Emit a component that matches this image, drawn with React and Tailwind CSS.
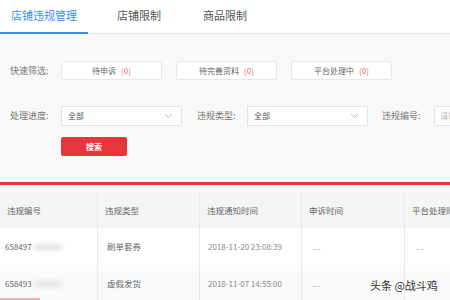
import React from 'react';

const font = { fontFamily: '"Noto Sans CJK SC", "Liberation Sans", sans-serif' };

function Chevron() {
  return (
    <svg width="9" height="6" viewBox="0 0 9 6" fill="none" stroke="#bfbfbf" strokeWidth="1">
      <path d="M1 1l3.5 3.5L8 1" />
    </svg>
  );
}

function QuickBtn({ label }) {
  return (
    <div className="w-[101px] h-[19px] shrink-0 bg-white border border-[#e8e8e8] rounded-[2px] flex items-center justify-center text-[8px] text-[#666]">
      {label}
      <span className="text-[#e9686b] ml-[5px]">(0)</span>
    </div>
  );
}

function Select() {
  return (
    <div className="w-[121px] h-[20px] shrink-0 bg-white border border-[#e6e6e6] flex items-center justify-between pl-[6px] pr-[8px] text-[8px] text-[#555]">
      <span>全部</span>
      <Chevron />
    </div>
  );
}

const cols = ['w-[98px]', 'w-[102px]', 'w-[102px]', 'w-[103px]', 'w-[80px]'];

const rows = [
  ['刷单套券', '2018-11-20 23:08:39', '658497'],
  ['虚假发货', '2018-11-07 14:55:00', '658493'],
];

export default function App() {
  return (
    <div className="w-[450px] h-[300px] overflow-hidden bg-[#f9f9f9] relative" style={font}>
      {/* Tabs */}
      <div className="h-[34px] bg-white border-b border-[#ececec] flex items-end text-[11px]">
        <div className="w-[88px] shrink-0 h-[34px] flex items-center justify-center pb-[2px] text-[#3a8ee6] border-b-2 border-[#3a8ee6] -mb-px">
          店铺违规管理
        </div>
        <div className="w-[102px] shrink-0 h-[34px] flex items-center justify-center pb-[2px] text-[#555]">
          店铺限制
        </div>
        <div className="w-[70px] shrink-0 h-[34px] flex items-center justify-center pb-[2px] text-[#555]">
          商品限制
        </div>
      </div>

      {/* Filters */}
      <div className="pl-[10px] pt-[27px] h-[151px] border-b-[3px] border-[#e53a3a]">
        <div className="flex items-center">
          <span className="w-[51px] shrink-0 text-[9px] text-[#777]">快速筛选:</span>
          <div className="flex gap-[14px]">
            <QuickBtn label="待申诉" />
            <QuickBtn label="待完善资料" />
            <QuickBtn label="平台处理中" />
          </div>
        </div>

        <div className="flex items-center mt-[26px]">
          <span className="w-[51px] shrink-0 text-[9px] text-[#777]">处理进度:</span>
          <Select />
          <span className="w-[65px] shrink-0 pl-[15px] text-[9px] text-[#777]">违规类型:</span>
          <Select />
          <span className="w-[66px] shrink-0 pl-[14px] text-[9px] text-[#777]">违规编号:</span>
          <div className="w-[60px] shrink-0 h-[20px] bg-white border border-[#e6e6e6] flex items-center pl-[5px] text-[8px] text-[#bbb]">
            请输入
          </div>
        </div>

        <div className="ml-[51px] mt-[11px] w-[66px] h-[19px] bg-[#e5373b] rounded-[2px] flex items-center justify-center text-[8px] text-white font-bold">
          搜索
        </div>
      </div>

      {/* Table */}
      <div className="mt-[7px] bg-white">
        <div className="flex h-[36px] bg-[#f5f5f5] text-[8.5px] text-[#666]">
          {['违规编号', '违规类型', '违规通知时间', '申诉时间', '平台处理时间'].map((h, i) => (
            <div key={h} className={`${cols[i]} shrink-0 flex items-center pl-[7px] whitespace-nowrap border-r border-[#ebebeb]`}>
              {h}
            </div>
          ))}
        </div>
        {rows.map((r, idx) => (
          <div key={idx} className={`flex h-[37px] text-[8.5px] text-[#666] ${idx === 1 ? 'bg-[#fafafa]' : 'bg-white'}`}>
            <div className={`${cols[0]} shrink-0 flex items-center pl-[5px] border-r border-[#ebebeb] text-[8px]`}>
              {r[2]}
              <span className="ml-[2px] w-[28px] h-[6px] bg-[#e4e4e4] rounded-full blur-[2px]" />
            </div>
            <div className={`${cols[1]} shrink-0 flex items-center pl-[9px] border-r border-[#ebebeb]`}>{r[0]}</div>
            <div className={`${cols[2]} shrink-0 flex items-center pl-[8px] border-r border-[#ebebeb] text-[8px] text-[#888]`}>{r[1]}</div>
            <div className={`${cols[3]} shrink-0 flex items-center pl-[11px] pt-[4px] border-r border-[#ebebeb] text-[#999]`}>- -</div>
            <div className={`${cols[4]} shrink-0 flex items-center pl-[11px] pt-[4px] text-[#999]`}>
              {idx === 0 ? '- -' : ''}
            </div>
          </div>
        ))}
      </div>

      <div className="absolute left-0 bottom-0 w-[40px] h-[2px] bg-[#f0b5b5]" />
      <div className="absolute left-[370px] top-[277px] text-[11px] text-[#333]">
        头条 @战斗鸡
      </div>
    </div>
  );
}
